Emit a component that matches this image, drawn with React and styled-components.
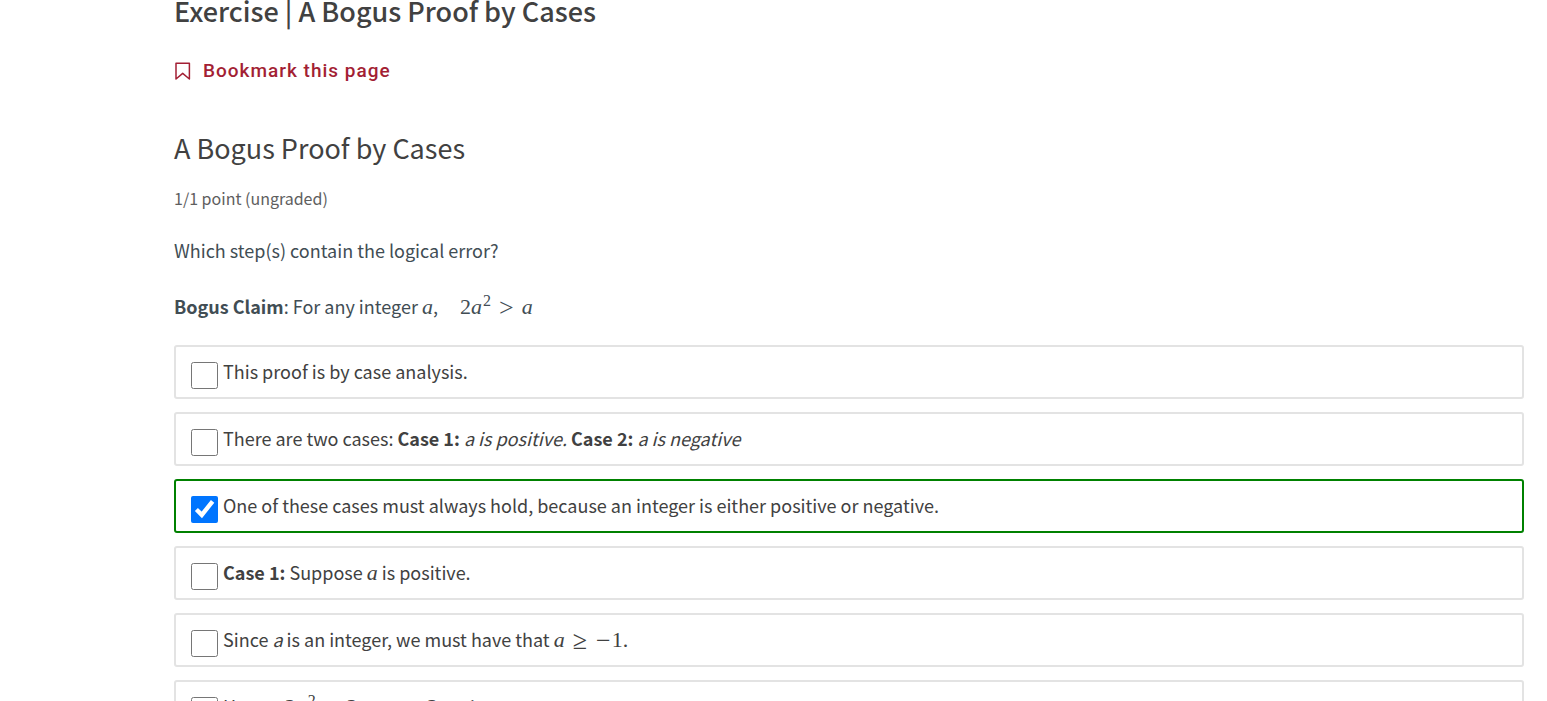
import React from "react";
import styled, { createGlobalStyle } from "styled-components";

const GlobalStyle = createGlobalStyle`
  * { box-sizing: border-box; }
  body {
    margin: 0;
    background: #fff;
    color: #414141;
    font-family: "Noto Sans CJK SC", "Open Sans", sans-serif;
    font-size: 18px;
    line-height: 26px;
  }
`;

const Viewport = styled.div`
  height: 100vh;
  overflow: hidden;
`;

const Page = styled.main`
  padding: 0 23px 0 174px;
`;

const UnitTitle = styled.h1`
  margin: 0;
  padding-bottom: 36px;
  font-size: 27px;
  font-weight: 500;
  line-height: 22px;
`;

const BookmarkButton = styled.button`
  display: flex;
  align-items: center;
  gap: 11px;
  margin: 0;
  padding: 0;
  border: 0;
  background: none;
  color: #a31f34;
  font: 500 19px/26px Roboto, sans-serif;
  letter-spacing: 1px;
  cursor: pointer;
`;

const BookmarkIcon = styled.svg`
  width: 18px;
  height: 18px;
  fill: none;
  stroke: currentColor;
`;

const ProblemTitle = styled.h2`
  margin: 46px 0 0;
  font-size: 27px;
  font-weight: 400;
  line-height: 36px;
`;

const Progress = styled.p`
  margin: 19px 0 0;
  color: #5e5e5e;
  font-size: 16px;
`;

const Prompt = styled.p`
  margin: 26px 0 0;
  color: #414d54;
`;

const Claim = styled(Prompt)`
  margin-top: 30px;
`;

const Choices = styled.fieldset`
  display: flex;
  flex-direction: column;
  gap: 13px;
  margin: 26px 0 0;
  padding: 0;
  border: 0;
  min-width: 0;
`;

const Choice = styled.label`
  display: flex;
  align-items: flex-start;
  gap: 5px;
  height: 54px;
  padding: 11px 15px;
  border: 2px solid ${(p) => (p.$correct ? "#008100" : "#e3e3e3")};
  border-radius: 3px;
`;

const Checkbox = styled.input`
  width: 27px;
  height: 27px;
  margin: 4px 0 0;
  flex: none;
`;

const MathText = styled.span`
  margin-left: ${(p) => (p.$quad ? "4px" : "0")};
  font-family: "Liberation Serif", serif;
  font-size: 22px;
  line-height: 22px;
  white-space: nowrap;

  sup {
    margin-left: 1px;
    font-size: 16px;
    line-height: 0;
  }
`;

const Operator = styled.span`
  margin: 0 ${(p) => (p.$prefix ? "1px" : "8px")};
  font-size: 26px;
  line-height: 0;
  vertical-align: -2px;
`;

const Dot = styled.span`
  margin: 0 5px;
`;

const Var = () => (
  <MathText>
    <i>a</i>
  </MathText>
);

const steps = [
  { id: "analysis", body: "This proof is by case analysis." },
  {
    id: "cases",
    body: (
      <>
        There are two cases: <b>Case 1:</b> <i>a is positive.</i> <b>Case 2:</b> <i>a is negative</i>
      </>
    ),
  },
  {
    id: "exhaustive",
    correct: true,
    body: "One of these cases must always hold, because an integer is either positive or negative.",
  },
  {
    id: "case1",
    body: (
      <>
        <b>Case 1:</b> Suppose <Var /> is positive.
      </>
    ),
  },
  {
    id: "integer",
    body: (
      <>
        Since <i>a</i> is an integer, we must have that{" "}
        <MathText>
          <i>a</i>
          <Operator>≥</Operator>
          <Operator $prefix>−</Operator>1.
        </MathText>
      </>
    ),
  },
  {
    id: "hence",
    body: (
      <>
        Hence,{" "}
        <MathText>
          2<i>a</i>
          <sup>2</sup>
          <Operator>=</Operator>2<i>a</i>
          <Dot>·</Dot>
          <i>a</i>
          <Operator>≥</Operator>2<i>a</i>
          <Dot>·</Dot>1
        </MathText>
      </>
    ),
  },
];

export default function App() {
  return (
    <Viewport>
      <GlobalStyle />
      <Page>
        <UnitTitle>Exercise | A Bogus Proof by Cases</UnitTitle>
        <BookmarkButton type="button">
          <BookmarkIcon viewBox="0 0 18 18" strokeWidth="1.5" strokeLinejoin="round" aria-hidden="true">
            <path d="M2 1.2h13.4v15.8l-6.7-5.6L2 17z" />
          </BookmarkIcon>
          Bookmark this page
        </BookmarkButton>
        <ProblemTitle>A Bogus Proof by Cases</ProblemTitle>
        <Progress>1/1 point (ungraded)</Progress>
        <Prompt>Which step(s) contain the logical error?</Prompt>
        <Claim>
          <b>Bogus Claim</b>: For any integer <Var />,{"\u2003"}
          <MathText $quad>
            2<i>a</i>
            <sup>2</sup>
            <Operator>&gt;</Operator>
            <i>a</i>
          </MathText>
        </Claim>
        <Choices aria-label="Proof steps">
          {steps.map((s) => (
            <Choice key={s.id} $correct={s.correct}>
              <Checkbox type="checkbox" defaultChecked={s.correct} />
              <span>{s.body}</span>
            </Choice>
          ))}
        </Choices>
      </Page>
    </Viewport>
  );
}
